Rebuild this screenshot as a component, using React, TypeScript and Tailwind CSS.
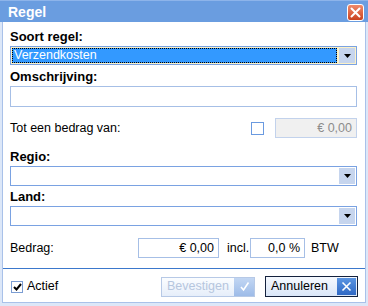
import React from "react";

const Arrow = () => (
  <div className="w-[16px] self-stretch bg-[#c6d5ee] flex items-center justify-center">
    <svg width="7" height="4" viewBox="0 0 7 4">
      <path d="M0 0 H7 L3.5 4 Z" fill="#000" />
    </svg>
  </div>
);

const EmptySelect = () => (
  <div className="h-[20px] border border-[#7aa2e2] bg-white flex p-[1px] justify-end">
    <Arrow />
  </div>
);

export default function App() {
  return (
    <div
      className="w-[368px] h-[306px] bg-[#dce7f8] flex flex-col text-[12.5px] text-black"
      style={{ fontFamily: '"Liberation Sans", Arial, sans-serif' }}
    >
      {/* title bar */}
      <div className="h-[22px] bg-[#6a9de0] border-t border-[#8db4ea] flex items-center justify-between pl-[8px] pr-[4px]">
        <span className="text-white font-bold text-[14px] leading-none">Regel</span>
        <div className="w-[17px] h-[17px] mt-[2px] rounded-[3px] border border-white bg-gradient-to-b from-[#f08a6a] to-[#c9401c] flex items-center justify-center">
          <svg width="11" height="11" viewBox="0 0 11 11">
            <path d="M1.5 1.5 L9.5 9.5 M9.5 1.5 L1.5 9.5" stroke="#fff" strokeWidth="2" strokeLinecap="round" />
          </svg>
        </div>
      </div>
      {/* body */}
      <div className="flex-1 mx-[2px] mb-[3px] border-x border-b border-[#a9c1e9] bg-white flex flex-col">
        <div className="pl-[7px] pr-[8px] flex flex-col">
          <div className="mt-[8px] h-[14px] leading-[14px] font-bold text-[13px]">Soort regel:</div>
          <div className="mt-[2px] h-[19px] border border-[#7aa2e2] bg-[#fcf1c6] flex p-[1px]">
            <div className="flex-1 mr-[2px] bg-[#3399ff] border border-dotted border-black flex items-center pl-[1px] text-white leading-none">
              Verzendkosten
            </div>
            <Arrow />
          </div>
          <div className="mt-[5px] h-[14px] leading-[14px] font-bold text-[13px]">Omschrijving:</div>
          <div className="mt-[2px] h-[21px] border border-[#a6bfe6] bg-white" />
          <div className="mt-[11px] h-[20px] flex items-center">
            <span className="flex-1">Tot een bedrag van:</span>
            <div className="w-[13px] h-[13px] border border-[#6a9ae0] bg-white mr-[11px]" />
            <div className="w-[82px] h-[20px] border border-[#c2d2ec] bg-[#f0f0f0] flex items-center justify-end pr-[4px] text-[#8c8c8c]">
              € 0,00
            </div>
          </div>
          <div className="mt-[12px] h-[14px] leading-[14px] font-bold text-[13px]">Regio:</div>
          <div className="mt-[2px]">
            <EmptySelect />
          </div>
          <div className="mt-[4px] h-[14px] leading-[14px] font-bold text-[13px]">Land:</div>
          <div className="mt-[2px]">
            <EmptySelect />
          </div>
          <div className="mt-[12px] h-[20px] flex items-center">
            <span className="w-[128px]">Bedrag:</span>
            <div className="w-[81px] h-[20px] border border-[#a6bfe6] flex items-center justify-end pr-[4px]">€ 0,00</div>
            <span className="ml-[8px] w-[23px]">incl.</span>
            <div className="w-[55px] h-[20px] border border-[#a6bfe6] flex items-center justify-end pr-[4px]">0,0 %</div>
            <span className="ml-[6px]">BTW</span>
          </div>
        </div>
        <div className="mt-[10px] h-[1px] bg-[#3b78cc]" />
        <div className="pl-[8px] pr-[7px] mt-[7px] h-[21px] flex items-center">
          <div className="w-[12px] h-[12px] border border-[#7b9dd3] bg-white flex items-center justify-center">
            <svg width="9" height="8" viewBox="0 0 9 8">
              <path d="M1 4 L3.5 6.5 L8 1" stroke="#000" strokeWidth="2" fill="none" />
            </svg>
          </div>
          <span className="ml-[4px] flex-1">Actief</span>
          <div className="w-[94px] h-[20px] border border-[#b7c9e6] bg-gradient-to-b from-[#fbfdff] to-[#e6eefa] flex">
            <span className="flex-1 flex items-center pl-[5px] text-[#b6c6de]">Bevestigen</span>
            <div className="w-[20px] bg-gradient-to-b from-[#c2d6f3] to-[#9dbbe8] flex items-center justify-center">
              <svg width="11" height="11" viewBox="0 0 11 11">
                <path d="M2 6 L4.5 9 L9.5 1.5" stroke="#fff" strokeWidth="1.6" fill="none" />
              </svg>
            </div>
          </div>
          <div className="ml-[10px] w-[93px] h-[21px] border border-[#14213d] bg-gradient-to-b from-[#f6f9fe] to-[#d9e6f8] flex p-[1px]">
            <span className="flex-1 flex items-center pl-[4px]">Annuleren</span>
            <div className="w-[19px] bg-gradient-to-b from-[#5b95e2] to-[#2f68c4] flex items-center justify-center">
              <svg width="11" height="11" viewBox="0 0 11 11">
                <path d="M1.5 1.5 L9.5 9.5 M9.5 1.5 L1.5 9.5" stroke="#fff" strokeWidth="1.6" />
              </svg>
            </div>
          </div>
        </div>
      </div>
    </div>
  );
}
